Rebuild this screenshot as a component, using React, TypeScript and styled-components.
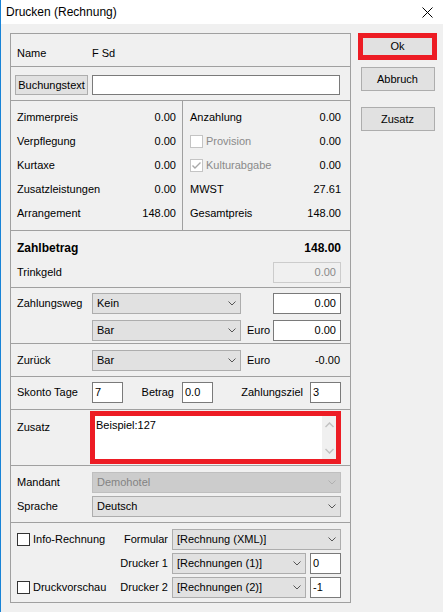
import React from "react";
import styled, { createGlobalStyle } from "styled-components";

const Global = createGlobalStyle`
  html, body { margin: 0; padding: 0; background: #f0f0f0; }
  body { font-family: "Liberation Sans", Arial, sans-serif; font-size: 11px; line-height: 13px; color: #000; }
  * { box-sizing: border-box; }
`;

const Window = styled.div`
  width: 443px;
  height: 612px;
  background: #f0f0f0;
  border-left: 1px solid #1883d7;
  display: flex;
  flex-direction: column;
  overflow: hidden;
`;

const TitleBar = styled.div`
  height: 24px;
  flex: none;
  background: #ffffff;
  display: flex;
  align-items: center;
  justify-content: space-between;
  padding: 0 10px 0 5px;
  font-size: 12px;
  line-height: 14px;
`;

const Body = styled.div`
  display: flex;
  align-items: flex-start;
  padding: 9px 0 0 9px;
`;

const Panel = styled.div`
  width: 341px;
  height: 570px;
  border: 1px solid #a0a0a0;
  display: flex;
  flex-direction: column;
`;

const Section = styled.div<{ $h: number; $pt?: number; $pl?: number; $pr?: number; $last?: boolean }>`
  flex: none;
  height: ${(p) => p.$h}px;
  padding: ${(p) => p.$pt ?? 0}px ${(p) => p.$pr ?? 9}px 0 ${(p) => p.$pl ?? 6}px;
  border-bottom: ${(p) => (p.$last ? "none" : "1px solid #a0a0a0")};
`;

const Row = styled.div<{ $cols: string; $h?: number; $mt?: number }>`
  display: grid;
  grid-template-columns: ${(p) => p.$cols};
  align-items: center;
  height: ${(p) => p.$h ?? 21}px;
  margin-top: ${(p) => p.$mt ?? 0}px;
`;

const Label = styled.span<{ $right?: boolean; $pad?: number; $grey?: boolean }>`
  white-space: nowrap;
  text-align: ${(p) => (p.$right ? "right" : "left")};
  padding-${(p) => (p.$right ? "right" : "left")}: ${(p) => p.$pad ?? 0}px;
  color: ${(p) => (p.$grey ? "#8a8a8a" : "#000")};
`;

const SelectBox = styled.div<{ $disabled?: boolean }>`
  height: 21px;
  border: 1px solid ${(p) => (p.$disabled ? "#bfbfbf" : "#adadad")};
  background: ${(p) => (p.$disabled ? "#cccccc" : "#e1e1e1")};
  color: ${(p) => (p.$disabled ? "#838383" : "#000")};
  display: flex;
  align-items: center;
  justify-content: space-between;
  padding: 0 4px 0 4px;
  white-space: nowrap;
`;

const TextBox = styled.div<{ $right?: boolean; $disabled?: boolean }>`
  height: 21px;
  border: 1px solid ${(p) => (p.$disabled ? "#cccccc" : "#7a7a7a")};
  background: ${(p) => (p.$disabled ? "#f0f0f0" : "#ffffff")};
  color: ${(p) => (p.$disabled ? "#8a8a8a" : "#000")};
  text-align: ${(p) => (p.$right ? "right" : "left")};
  padding: ${(p) => (p.$right ? "0 4px 0 0" : "0 0 0 2px")};
  line-height: 18px;
`;

const PushButton = styled.div<{ $w: number; $h: number; $mt?: number }>`
  width: ${(p) => p.$w}px;
  height: ${(p) => p.$h}px;
  margin-top: ${(p) => p.$mt ?? 0}px;
  border: 1px solid #adadad;
  background: #e1e1e1;
  display: flex;
  align-items: center;
  justify-content: center;
  white-space: nowrap;
  flex: none;
`;

const ButtonRow = styled.div`
  display: flex;
  align-items: center;
  gap: 4px;
  height: 20px;
`;

const WideInput = styled.div`
  flex: 1;
  height: 20px;
  margin-right: 1px;
  border: 1px solid #7a7a7a;
  background: #ffffff;
`;

const Split = styled.div`
  display: flex;
  height: 100%;
`;

const Column = styled.div<{ $w?: number; $pl: number; $pr: number }>`
  ${(p) => (p.$w ? `width: ${p.$w}px;` : "flex: 1;")}
  padding: 4px ${(p) => p.$pr}px 0 ${(p) => p.$pl}px;
  display: flex;
  flex-direction: column;
`;

const VDivider = styled.div`
  width: 1px;
  background: #a0a0a0;
  flex: none;
`;

const ValueRow = styled.div<{ $h?: number; $bold?: boolean }>`
  height: ${(p) => p.$h ?? 24}px;
  display: flex;
  align-items: center;
  justify-content: space-between;
  font-weight: ${(p) => (p.$bold ? 700 : 400)};
  font-size: ${(p) => (p.$bold ? 12 : 11)}px;
`;

const CheckLabel = styled.span<{ $grey?: boolean }>`
  display: flex;
  align-items: center;
  gap: 3px;
  color: ${(p) => (p.$grey ? "#8a8a8a" : "#000")};
  white-space: nowrap;
`;

const CheckBox = styled.span<{ $disabled?: boolean }>`
  width: 13px;
  height: 13px;
  flex: none;
  border: 1px solid ${(p) => (p.$disabled ? "#c4c4c4" : "#333333")};
  background: #ffffff;
  display: inline-flex;
  align-items: center;
  justify-content: center;
`;

const NoteRow = styled.div`
  display: grid;
  grid-template-columns: 73px 1fr;
  align-items: start;
  margin-right: 0;
`;

const NoteLabel = styled.span`
  padding-top: 10px;
`;

const RedFrame = styled.div<{ $h: number }>`
  height: ${(p) => p.$h}px;
  border: 5px solid #ed1c24;
  background: #ffffff;
  display: flex;
`;

const NoteText = styled.div`
  flex: 1;
  padding: 3px 0 0 1px;
`;

const ScrollStrip = styled.div`
  width: 14px;
  background: #f0f0f0;
  display: flex;
  flex-direction: column;
  justify-content: space-between;
  align-items: center;
  padding: 6px 0 5px;
`;

const InfoRow = styled.div<{ $mt?: number }>`
  display: flex;
  align-items: center;
  gap: 4px;
  height: 21px;
  margin-top: ${(p) => p.$mt ?? 0}px;
`;

const InfoLeft = styled.div`
  width: 151px;
  flex: none;
  display: flex;
  align-items: center;
  justify-content: space-between;
`;

const Grow = styled.div<{ $w?: number }>`
  ${(p) => (p.$w ? `width: ${p.$w}px; flex: none;` : "flex: 1;")}
`;

const Side = styled.div`
  width: 79px;
  margin-left: 7px;
  display: flex;
  flex-direction: column;
  align-items: center;
`;

const OkFrame = styled.div`
  width: 79px;
  height: 27px;
  border: 5px solid #ed1c24;
  background: #e1e1e1;
  display: flex;
  align-items: center;
  justify-content: center;
`;

const Chevron = ({ color = "#555" }: { color?: string }) => (
  <svg width="8" height="5" viewBox="0 0 8 5">
    <polyline points="0.5,0.5 4,4 7.5,0.5" fill="none" stroke={color} strokeWidth="1" />
  </svg>
);

const ArrowUp = () => (
  <svg width="9" height="6" viewBox="0 0 9 6">
    <polyline points="0.5,5 4.5,1 8.5,5" fill="none" stroke="#c2c2c2" strokeWidth="1.5" />
  </svg>
);

const ArrowDown = () => (
  <svg width="9" height="6" viewBox="0 0 9 6">
    <polyline points="0.5,1 4.5,5 8.5,1" fill="none" stroke="#c2c2c2" strokeWidth="1.5" />
  </svg>
);

const Check = () => (
  <svg width="11" height="11" viewBox="0 0 11 11">
    <polyline points="1.5,5.5 4,8 9.5,2.5" fill="none" stroke="#a8a8a8" strokeWidth="1.4" />
  </svg>
);

const CloseX = () => (
  <svg width="11" height="11" viewBox="0 0 11 11">
    <line x1="0.5" y1="0.5" x2="10.5" y2="10.5" stroke="#000" strokeWidth="1" />
    <line x1="10.5" y1="0.5" x2="0.5" y2="10.5" stroke="#000" strokeWidth="1" />
  </svg>
);

const Select = ({ value, disabled }: { value: string; disabled?: boolean }) => (
  <SelectBox $disabled={disabled}>
    <span>{value}</span>
    <Chevron color={disabled ? "#b0b0b0" : "#555"} />
  </SelectBox>
);

const leftRows: [string, string][] = [
  ["Zimmerpreis", "0.00"],
  ["Verpflegung", "0.00"],
  ["Kurtaxe", "0.00"],
  ["Zusatzleistungen", "0.00"],
  ["Arrangement", "148.00"],
];

export default function App() {
  return (
    <>
      <Global />
      <Window>
        <TitleBar>
          <span>Drucken (Rechnung)</span>
          <CloseX />
        </TitleBar>
        <Body>
          <Panel>
            <Section $h={33} $pt={13}>
              <Row $cols="75px 1fr" $h={13}>
                <Label>Name</Label>
                <Label>F Sd</Label>
              </Row>
            </Section>

            <Section $h={34} $pt={8} $pl={4}>
              <ButtonRow>
                <PushButton $w={73} $h={20}>Buchungstext</PushButton>
                <WideInput />
              </ButtonRow>
            </Section>

            <Section $h={130} $pl={0} $pr={0}>
              <Split>
                <Column $w={171} $pl={6} $pr={6}>
                  {leftRows.map(([l, v]) => (
                    <ValueRow key={l}>
                      <span>{l}</span>
                      <span>{v}</span>
                    </ValueRow>
                  ))}
                </Column>
                <VDivider />
                <Column $pl={7} $pr={9}>
                  <ValueRow>
                    <span>Anzahlung</span>
                    <span>0.00</span>
                  </ValueRow>
                  <ValueRow>
                    <CheckLabel $grey>
                      <CheckBox $disabled />
                      Provision
                    </CheckLabel>
                    <span>0.00</span>
                  </ValueRow>
                  <ValueRow>
                    <CheckLabel $grey>
                      <CheckBox $disabled>
                        <Check />
                      </CheckBox>
                      Kulturabgabe
                    </CheckLabel>
                    <span>0.00</span>
                  </ValueRow>
                  <ValueRow>
                    <span>MWST</span>
                    <span>27.61</span>
                  </ValueRow>
                  <ValueRow>
                    <span>Gesamtpreis</span>
                    <span>148.00</span>
                  </ValueRow>
                </Column>
              </Split>
            </Section>

            <Section $h={57} $pt={6}>
              <ValueRow $h={22} $bold>
                <span>Zahlbetrag</span>
                <span>148.00</span>
              </ValueRow>
              <Row $cols="1fr 68px" $mt={3}>
                <Label>Trinkgeld</Label>
                <TextBox $right $disabled>0.00</TextBox>
              </Row>
            </Section>

            <Section $h={56} $pt={5}>
              <Row $cols="75px 149px 32px 68px">
                <Label>Zahlungsweg</Label>
                <Select value="Kein" />
                <span />
                <TextBox $right>0.00</TextBox>
              </Row>
              <Row $cols="75px 149px 32px 68px" $mt={6}>
                <span />
                <Select value="Bar" />
                <Label $pad={6}>Euro</Label>
                <TextBox $right>0.00</TextBox>
              </Row>
            </Section>

            <Section $h={33} $pt={6}>
              <Row $cols="75px 149px 32px 68px">
                <Label>Zurück</Label>
                <Select value="Bar" />
                <Label $pad={6}>Euro</Label>
                <Label $right $pad={1}>-0.00</Label>
              </Row>
            </Section>

            <Section $h={33} $pt={5}>
              <Row $cols="75px 31px 59px 31px 97px 31px">
                <Label>Skonto Tage</Label>
                <TextBox>7</TextBox>
                <Label $right $pad={8}>Betrag</Label>
                <TextBox>0.0</TextBox>
                <Label $right $pad={7}>Zahlungsziel</Label>
                <TextBox>3</TextBox>
              </Row>
            </Section>

            <Section $h={56} $pt={1}>
              <NoteRow>
                <NoteLabel>Zusatz</NoteLabel>
                <RedFrame $h={53}>
                  <NoteText>Beispiel:127</NoteText>
                  <ScrollStrip>
                    <ArrowUp />
                    <ArrowDown />
                  </ScrollStrip>
                </RedFrame>
              </NoteRow>
            </Section>

            <Section $h={57} $pt={6}>
              <Row $cols="75px 1fr">
                <Label>Mandant</Label>
                <Select value="Demohotel" disabled />
              </Row>
              <Row $cols="75px 1fr" $mt={3}>
                <Label>Sprache</Label>
                <Select value="Deutsch" />
              </Row>
            </Section>

            <Section $h={79} $pt={6} $last>
              <InfoRow>
                <InfoLeft>
                  <CheckLabel>
                    <CheckBox />
                    Info-Rechnung
                  </CheckLabel>
                  <span>Formular</span>
                </InfoLeft>
                <Grow>
                  <Select value="[Rechnung (XML)]" />
                </Grow>
              </InfoRow>
              <InfoRow $mt={3}>
                <InfoLeft>
                  <span />
                  <span>Drucker 1</span>
                </InfoLeft>
                <Grow $w={134}>
                  <Select value="[Rechnungen (1)]" />
                </Grow>
                <Grow $w={31}>
                  <TextBox>0</TextBox>
                </Grow>
              </InfoRow>
              <InfoRow $mt={3}>
                <InfoLeft>
                  <CheckLabel>
                    <CheckBox />
                    Druckvorschau
                  </CheckLabel>
                  <span>Drucker 2</span>
                </InfoLeft>
                <Grow $w={134}>
                  <Select value="[Rechnungen (2)]" />
                </Grow>
                <Grow $w={31}>
                  <TextBox>-1</TextBox>
                </Grow>
              </InfoRow>
            </Section>
          </Panel>

          <Side>
            <OkFrame>Ok</OkFrame>
            <PushButton $w={74} $h={24} $mt={7}>Abbruch</PushButton>
            <PushButton $w={74} $h={24} $mt={16}>Zusatz</PushButton>
          </Side>
        </Body>
      </Window>
    </>
  );
}
